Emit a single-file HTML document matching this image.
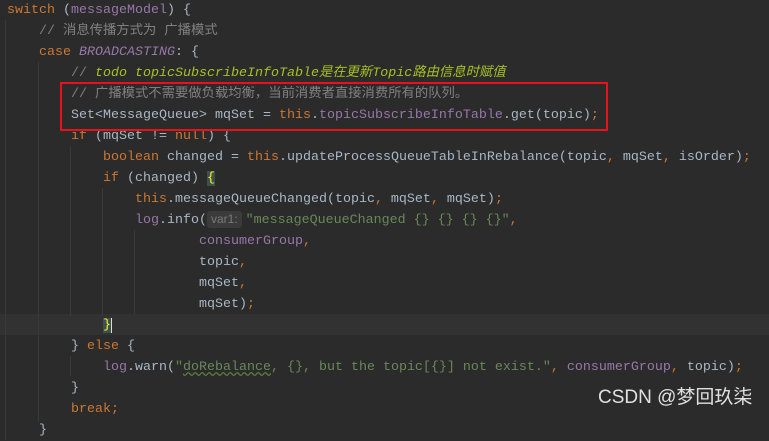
<!DOCTYPE html>
<html><head><meta charset="utf-8"><style>
html,body{margin:0;padding:0;}
body{width:769px;height:440px;background:#2b2b2b;position:relative;overflow:hidden;font-family:"Liberation Mono","Noto Sans CJK SC",monospace;font-size:13.33px;color:#a9b7c6;}
.l{position:absolute;left:7px;height:21px;line-height:21px;white-space:pre;}
.k{color:#cc7832}.f{color:#9876aa}.s{color:#6a8759}.c{color:#808080}
.t{color:#a8c023;font-style:italic}
.i{font-style:italic}
.g{position:absolute;width:1px;background:#393939;}
.hint{display:inline-block;background:#3b3b3b;color:#7a7a7a;font-family:"Liberation Sans",sans-serif;font-size:12px;line-height:17px;padding:0 4px;border-radius:3px;margin-right:4px;}
</style></head><body>
<div style="position:absolute;left:0;top:314px;width:769px;height:21px;background:#323232"></div>
<div class="g" style="left:5px;top:20px;height:420px"></div>
<div class="g" style="left:38px;top:62px;height:360px"></div>
<div class="g" style="left:70px;top:146px;height:170px"></div>
<div class="g" style="left:102px;top:188px;height:128px"></div>
<div class="g" style="left:134px;top:230px;height:84px"></div>
<div class="g" style="left:70px;top:356px;height:20px"></div>
<div class="l" style="top:0px"><span class="k">switch</span> (<span class="f">messageModel</span>) {</div>
<div class="l" style="top:21px">    <span class="c">// 消息传播方式为 广播模式</span></div>
<div class="l" style="top:42px">    <span class="k">case</span> <span class="f i">BROADCASTING</span>: {</div>
<div class="l" style="top:63px">        <span class="c">// </span><span class="t">todo topicSubscribeInfoTable是在更新Topic路由信息时赋值</span></div>
<div class="l" style="top:84px">        <span class="c">// 广播模式不需要做负载均衡，当前消费者直接消费所有的队列。</span></div>
<div class="l" style="top:105px">        Set&lt;MessageQueue&gt; mqSet = <span class="k">this</span>.<span class="f">topicSubscribeInfoTable</span>.get(topic)<span class="k">;</span></div>
<div class="l" style="top:126px">        <span class="k">if</span> (mqSet != <span class="k">null</span>) {</div>
<div class="l" style="top:147px">            <span class="k">boolean</span> changed = <span class="k">this</span>.updateProcessQueueTableInRebalance(topic<span class="k">,</span> mqSet<span class="k">,</span> isOrder)<span class="k">;</span></div>
<div class="l" style="top:168px">            <span class="k">if</span> (changed) <span style="color:#ffef28;background:#3b514d">{</span></div>
<div class="l" style="top:189px">                <span class="k">this</span>.messageQueueChanged(topic<span class="k">,</span> mqSet<span class="k">,</span> mqSet)<span class="k">;</span></div>
<div class="l" style="top:210px">                <span class="f">log</span>.info(<span class="hint">var1:</span><span class="s">"messageQueueChanged {} {} {} {}"</span><span class="k">,</span></div>
<div class="l" style="top:231px">                        <span class="f">consumerGroup</span><span class="k">,</span></div>
<div class="l" style="top:252px">                        topic<span class="k">,</span></div>
<div class="l" style="top:273px">                        mqSet<span class="k">,</span></div>
<div class="l" style="top:294px">                        mqSet)<span class="k">;</span></div>
<div class="l" style="top:315px">            <span style="color:#ffef28;background:#3b514d">}</span><span style="border-left:1px solid #ddd"></span></div>
<div class="l" style="top:336px">        } <span class="k">else</span> {</div>
<div class="l" style="top:357px">            <span class="f">log</span>.warn(<span class="s">"<span style="text-decoration:underline wavy #5a7a40">doRebalance</span>, {}, but the topic[{}] not exist."</span><span class="k">,</span> <span class="f">consumerGroup</span><span class="k">,</span> topic)<span class="k">;</span></div>
<div class="l" style="top:378px">        }</div>
<div class="l" style="top:399px">        <span class="k">break;</span></div>
<div class="l" style="top:420px">    }</div>
<div style="position:absolute;left:60px;top:82px;width:544px;height:45px;border:2px solid #e5141b"></div>
<div style="position:absolute;left:598px;top:382px;font-family:'Liberation Sans','Noto Sans CJK SC',sans-serif;font-size:19px;color:#e0e0e0;white-space:nowrap">CSDN @梦回玖柒</div>
</body></html>
